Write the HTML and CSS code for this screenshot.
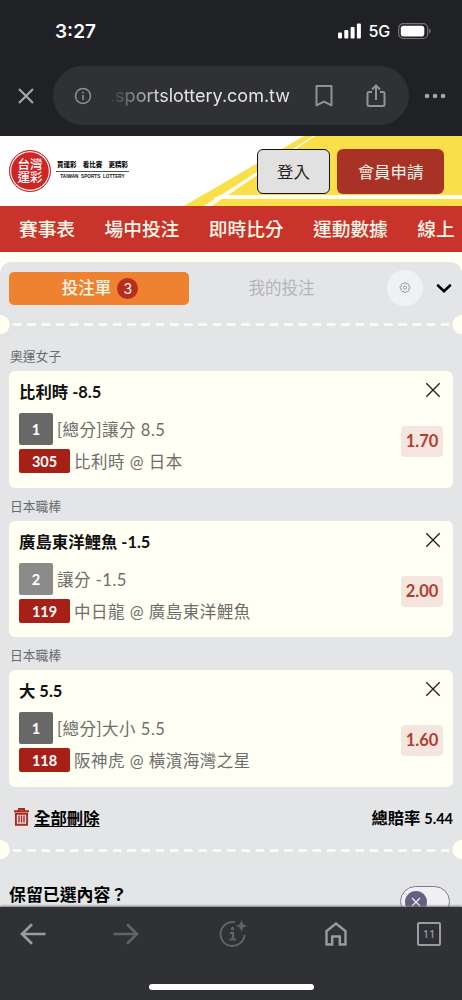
FILE: index.html
```html
<!DOCTYPE html>
<html lang="zh-Hant">
<head>
<meta charset="utf-8">
<meta name="viewport" content="width=device-width, initial-scale=1">
<title>台灣運彩</title>
<link rel="stylesheet" href="styles.css">
</head>
<body>
<div class="phone">
  <header class="browser">
    <div class="status">
      <span class="clock">3:27</span>
      <span class="signals">
        <svg width="23" height="16" viewBox="0 0 23 16" fill="#fff"><rect y="9.5" width="4" height="6" rx="1"/><rect x="6.3" y="7" width="4" height="8.500" rx="1"/><rect x="12.600" y="4" width="4" height="11.500" rx="1"/><rect x="18.900" y=".5" width="4" height="15" rx="1"/></svg>
        <span class="network">5G</span>
        <svg width="33" height="17" viewBox="0 0 33 17"><rect x=".7" y=".7" width="29" height="14.800" rx="4.500" fill="none" stroke="#737477" stroke-width="1.200"/><rect x="2.800" y="2.700" width="23.500" height="10.800" rx="2.800" fill="#fff"/><path d="M31 5.500c2 .8 2 4.200 0 5z" fill="#737477"/></svg>
      </span>
    </div>
    <div class="toolbar">
      <svg class="close" width="18" height="18" viewBox="0 0 18 18"><path d="M2 2l14 14M16 2L2 16" stroke="#a5a6aa" stroke-width="2.200"/></svg>
      <div class="address">
        <svg class="info" width="18" height="18" viewBox="0 0 18 18" fill="none" stroke="#919297" stroke-width="1.500"><circle cx="9" cy="9" r="7.500"/><path d="M9 8v5M9 4.800v1.700"/></svg>
        <span class="url">.sportslottery.com.tw</span>
        <svg class="bookmark" width="18" height="22" viewBox="0 0 18 22" fill="none" stroke="#929398" stroke-width="2"><path d="M1.500 1h15v19.300L9 16.600l-7.500 3.700z" stroke-linejoin="round"/></svg>
        <svg class="share" width="20" height="24" viewBox="0 0 20 24" fill="none" stroke="#929398" stroke-width="2"><path d="M6 8H3Q1.500 8 1.500 9.500v11Q1.500 22 3 22h14q1.500 0 1.500-1.500v-11Q18.500 8 17 8h-3M10 16V1.500M6 5.500l4-4 4 4"/></svg>
      </div>
      <svg class="more" width="22" height="6" viewBox="0 0 22 6" fill="#a5a6aa"><circle cx="3" cy="3" r="2.300"/><circle cx="11" cy="3" r="2.300"/><circle cx="19" cy="3" r="2.300"/></svg>
    </div>
  </header>

  <section class="brandbar">
    <svg class="rays" width="462" height="70" viewBox="0 0 462 70"><path d="M304 0h158v70H184z" fill="#f9df4a"/><path d="M313 0h2L212 70h-8zM220 59h242v4H213z" fill="#fffef4"/></svg>
    <div class="brand">
      <div class="seal"><span>台灣</span><span>運彩</span></div>
      <div class="slogan"><b><span>買運彩</span><span>看比賽</span><span>更精彩</span></b><i>TAIWAN&nbsp; SPORTS&nbsp; LOTTERY</i></div>
    </div>
    <div class="account"><button class="login">登入</button><button class="join">會員申請</button></div>
  </section>

  <nav class="menu"><a>賽事表</a><a>場中投注</a><a>即時比分</a><a>運動數據</a><a>線上</a></nav>

  <main class="slip">
    <div class="tabs">
      <div class="tab active">投注單<span class="count">3</span></div>
      <div class="tab">我的投注</div>
      <span class="gear"><svg width="12" height="12" viewBox="0 0 12 12" fill="none" stroke="#8c8d8f" stroke-width=".8"><path d="M4.700 2L5.200.8h1.600L7.300 2l1.500-.6L10 2.600l-.6 1.500 1.500.6v1.700l-1.500.6.6 1.500-1.300 1.200-1.400-.6-.5 1.500H5.200L4.700 9.100l-1.500.6L2 8.500 2.600 7 1.100 6.400V4.700l1.500-.6L2 2.600l1.200-1.200z"/><circle cx="6" cy="5.600" r="1.600"/></svg></span>
      <svg class="chevron" width="16" height="10" viewBox="0 0 16 10"><path d="M2 2.500l6 5.700 6-5.700" fill="none" stroke="#000" stroke-width="2.600" stroke-linecap="round"/></svg>
    </div>
    <div class="perforation"><svg width="462" height="3" viewBox="0 0 462 3"><path d="M13 1.500h436" stroke="#fffffa" stroke-width="2.700" stroke-dasharray="8.500 5.770"/></svg></div>

    <h3 class="league first">奧運女子</h3>
    <article class="bet">
      <div class="pick"><h2>比利時 -8.5</h2><p><span class="no">1</span>[總分]讓分 8.5</p><p><span class="code">305</span>比利時 @ 日本</p></div>
      <div class="side"><svg width="16" height="16" viewBox="0 0 16 16"><path d="M1.300 1.300l13.400 13.400M14.700 1.300L1.300 14.700" stroke="#20201e" stroke-width="1.300"/></svg><span class="odds">1.70</span></div>
    </article>
    <h3 class="league">日本職棒</h3>
    <article class="bet">
      <div class="pick"><h2>廣島東洋鯉魚 -1.5</h2><p><span class="no light">2</span>讓分 -1.5</p><p><span class="code">119</span>中日龍 @ 廣島東洋鯉魚</p></div>
      <div class="side"><svg width="16" height="16" viewBox="0 0 16 16"><path d="M1.300 1.300l13.400 13.400M14.700 1.300L1.300 14.700" stroke="#20201e" stroke-width="1.300"/></svg><span class="odds">2.00</span></div>
    </article>
    <h3 class="league">日本職棒</h3>
    <article class="bet">
      <div class="pick"><h2>大 5.5</h2><p><span class="no">1</span>[總分]大小 5.5</p><p><span class="code">118</span>阪神虎 @ 橫濱海灣之星</p></div>
      <div class="side"><svg width="16" height="16" viewBox="0 0 16 16"><path d="M1.300 1.300l13.400 13.400M14.700 1.300L1.300 14.700" stroke="#20201e" stroke-width="1.300"/></svg><span class="odds">1.60</span></div>
    </article>

    <div class="summary">
      <a class="clear"><svg width="15" height="18" viewBox="0 0 15 18" fill="none" stroke="#ae2720" stroke-width="1.900"><path d="M0 3.300h15M5 3V1h5v2M1.900 5.700h11.200v11H1.900z"/><path d="M5 7.500v7M7.500 7.500v7M10 7.500v7" stroke-width="1.400"/></svg><span>全部刪除</span></a>
      <strong>總賠率 <span>5.44</span></strong>
    </div>
    <div class="perforation"><svg width="462" height="3" viewBox="0 0 462 3"><path d="M13 1.500h436" stroke="#fffffa" stroke-width="2.700" stroke-dasharray="8.500 5.770"/></svg></div>
    <div class="keep"><strong>保留已選內容？</strong><span class="switch"><span class="knob"><svg width="10" height="10" viewBox="0 0 10 10"><path d="M1 1l8 8M9 1L1 9" stroke="#f1f0fa" stroke-width="1.200"/></svg></span></span></div>
  </main>

  <footer class="bottom">
    <div class="controls">
      <svg width="26" height="22" viewBox="0 0 26 22" fill="none" stroke="#9b9ca0" stroke-width="2.600"><path d="M25.500 11H2M12 1.200L2 11l10 9.800"/></svg>
      <svg width="26" height="22" viewBox="0 0 26 22" fill="none" stroke="#626367" stroke-width="2.600"><path d="M.5 11H24M14 1.200L24 11l-10 9.800"/></svg>
      <svg width="28" height="28" viewBox="0 0 28 28" fill="none" stroke="#626367" stroke-width="2"><path d="M16 2.300A12 12 0 1 0 25.500 15"/><path d="M11 12.800h3v6.700M10.500 19.500h6.500" stroke-width="2.200"/><circle cx="13.500" cy="8.500" r="1.700" fill="#626367" stroke="none"/><path d="M22.500 0l1.500 4.300L28 6l-4 1.500-1.500 4.500-1.500-4.500L17 6l4-1.700z" fill="#626367" stroke="none"/></svg>
      <svg width="22" height="24" viewBox="0 0 22 24" fill="none" stroke="#9b9ca0" stroke-width="2.400"><path d="M1.500 22.500V9L11 1.500 20.500 9v13.500h-5.700v-8H7.200v8z"/></svg>
      <span class="tabcount">11</span>
    </div>
    <div class="homebar"></div>
  </footer>
</div>
</body>
</html>
```
FILE: styles.css
```css
* { box-sizing: border-box; }
body { margin: 0; background: #fffef3; font-family: Lato, "Noto Sans CJK TC", sans-serif; }
svg { display: block; flex: none; }
h2, h3, p { margin: 0; }
.phone { width: 462px; height: 1000px; overflow: hidden; display: flex; flex-direction: column; }

.browser { height: 136px; flex: none; background: #202125; }
.status { height: 66px; padding: 21px 31px 0 55px; display: flex; justify-content: space-between; color: #fff; font-family: Inter, sans-serif; }
.clock { font-size: 19px; line-height: 21px; font-weight: 600; }
.signals { display: flex; align-items: center; height: 20px; }
.network { font-size: 16px; font-weight: 500; margin: 0 8px 0 8px; letter-spacing: -.2px; }
.toolbar { display: flex; align-items: center; padding-left: 17px; }
.address { width: 356px; height: 59px; margin: 0 15px 0 18px; padding: 0 22px 0 21px; border-radius: 30px; background: #303135; display: flex; align-items: center; }
.url { width: 182px; margin-left: 16px; display: flex; justify-content: flex-end; white-space: nowrap; color: #e4e4e7; font: 400 18px Inter, sans-serif; -webkit-mask-image: linear-gradient(90deg, transparent, #000 30%); mask-image: linear-gradient(90deg, transparent, #000 30%); }
.bookmark { margin-left: 25px; }
.share { margin-left: 33px; }

.brandbar { position: relative; flex: none; height: 70px; background: #fff; display: flex; justify-content: space-between; }
.rays { position: absolute; inset: 0; }
.brand { position: relative; display: flex; padding: 14px 0 0 9px; gap: 5px; }
.seal { width: 42px; height: 42px; border-radius: 50%; background: #cf2524; border: 1px solid #cf2524; box-shadow: inset 0 0 0 1.200px #fff; display: flex; flex-direction: column; align-items: center; justify-content: center; color: #fff; font-size: 12.500px; font-weight: 500; line-height: 13px; }
.seal span { height: 13px; }
.slogan { width: 73px; padding-top: 9px; color: #111; }
.slogan b { display: flex; justify-content: space-between; border-bottom: 1px solid #555; font-size: 6.500px; line-height: 11px; font-weight: 900; padding: 0 1px; height: 13px; }
.slogan i { display: block; font: 700 4.700px/9px "Liberation Sans", sans-serif; white-space: nowrap; text-align: center; }
.account { position: relative; display: flex; gap: 7px; padding: 13px 18px 0 0; }
button { height: 45px; padding: 0 0 2px; border-radius: 6px; font: 400 16.400px Lato, "Noto Sans CJK TC", sans-serif; }
.login { width: 73px; border: 1px solid #111; background: #e1e1e1; color: #222; }
.join { width: 107px; border: 0; background: #a73225; color: #fff1e8; }

.menu { height: 46px; flex: none; display: flex; align-items: center; gap: 29.500px; padding: 0 0 3px 19px; background: #c8332b; color: #fff7e7; font-size: 18.700px; font-weight: 500; white-space: nowrap; overflow: hidden; }

.slip { height: 645px; margin-top: 10px; overflow: hidden; border-radius: 12px 12px 0 0; background: #e3e5e7; }
.tabs { height: 43px; padding-top: 9.500px; padding-left: 9px; display: flex; align-items: center; }
.tab { width: 185px; text-align: center; color: #b3b4b6; font-size: 16.500px; line-height: 33px; }
.tab.active { width: 180px; height: 33.500px; display: flex; align-items: center; justify-content: center; gap: 6px; border-radius: 5px; background: #ee8231; color: #fff8e8; font-weight: 500; padding-left: 2px; }
.count { width: 21px; height: 21px; border-radius: 50%; background: #b72d1e; font: 400 14px/21px Inter, sans-serif; }
.gear { width: 36px; height: 36px; margin-left: 13px; border-radius: 50%; background: #f0f1f3; display: grid; place-items: center; flex: none; }
.chevron { margin-left: 13px; }
.perforation { height: 20px; display: flex; align-items: center; background: radial-gradient(circle at 0 48%, #fffff2 9.300px, transparent 9.800px), radial-gradient(circle at 100% 48%, #fffff2 9.300px, transparent 9.800px); }
.tabs + .perforation { margin-top: 9.500px; }
.league { height: 33px; padding-left: 10px; color: #696a6c; font-size: 12.800px; line-height: 36px; font-weight: 400; }
.league.first { margin-top: 3.500px; }
.bet { height: 116.700px; margin: 0 9px; padding: 10px; border-radius: 6px; background: #fffff4; display: flex; justify-content: space-between; }
.bet h2 { font-size: 16.400px; line-height: 21px; font-weight: 700; color: #111; }
.bet p { display: flex; align-items: center; gap: 4px; color: #6d6e6b; font-size: 16.500px; letter-spacing: .5px; white-space: nowrap; }
.bet h2 + p { height: 32px; margin: 11px 0 4px; }
.no, .code { color: #fff; text-align: center; font-weight: 700; border-radius: 2px; letter-spacing: 0; font-size: 14.500px; }
.no { width: 34px; height: 32px; line-height: 33px; background: #686868; }
.no.light { background: #8b8b8a; }
.code { width: 51px; height: 24px; line-height: 25px; background: #a62018; }
.side { display: flex; flex-direction: column; align-items: flex-end; }
.side svg { margin: 1px 2px 28px 0; }
.odds { width: 42px; height: 31px; border-radius: 4px; background: #f4e6df; color: #b13c30; font-size: 16.500px; line-height: 31px; text-align: center; font-weight: 700; }
.summary { height: 53px; padding: 4px 9px 0 14px; display: flex; justify-content: space-between; align-items: flex-start; font-size: 16.400px; }
.clear { display: flex; align-items: center; height: 52px; gap: 5px; font-weight: 700; text-decoration: underline; text-underline-offset: 2px; text-decoration-thickness: 1px; }
.summary strong { line-height: 53px; font-size: 16.300px; }
.summary strong span { font-size: 14.500px; }
.keep { display: flex; justify-content: space-between; padding: 23px 12px 0 9px; font-size: 16.900px; line-height: 24px; }
.switch { flex: none; width: 50px; height: 31px; margin-top: 3px; border: 1px solid #7c7995; border-radius: 16px; background: #f0f0f4; padding: 4px; }
.knob { width: 22px; height: 22px; border-radius: 50%; background: #66617f; display: grid; place-items: center; }

.bottom { height: 93px; flex: none; background: #303135; display: flex; flex-direction: column; align-items: center; box-shadow: 0 -1px 2px #77777a; }
.controls { width: 100%; height: 53px; padding: 0 21px 0 20px; display: grid; grid-template-columns: 93px 106px 106px 92px 24px; align-items: center; }
.tabcount { width: 24px; height: 24px; border: 2px solid #9b9ca0; border-radius: 2px; color: #9b9ca0; font: 500 11px/20px "Noto Sans", sans-serif; text-align: center; }
.homebar { width: 165px; height: 6px; margin-top: 24px; border-radius: 3px; background: #fff; }
```
